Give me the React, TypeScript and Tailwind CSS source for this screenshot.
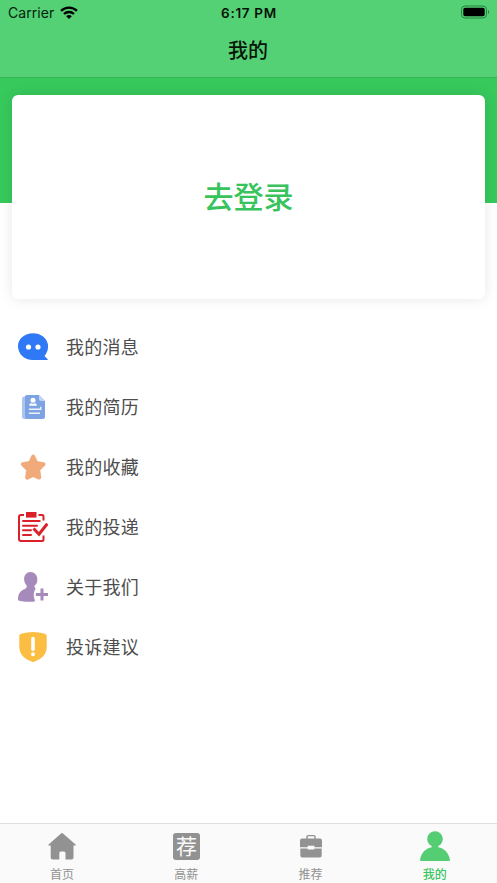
import type { ReactNode } from "react";

const MessageIcon = () => (
  <svg viewBox="0 0 30 30" className="size-[30px]">
    <path d="M15 1.300C6.600 1.300 0 6.800 0 14.300c0 7.600 6.400 13.800 15 13.800h14.200c.8 0 .7-.6.2-1l-2.900-3.200c2.200-2.400 3.600-5.600 3.600-9.600C30 6.800 23.400 1.300 15 1.300Z" fill="#2f78f6" />
    <circle cx="10.500" cy="15" r="2.600" fill="#fff" />
    <circle cx="20" cy="15" r="2.600" fill="#fff" />
  </svg>
);

const ResumeIcon = () => (
  <svg viewBox="0 0 30 30" className="size-[30px]">
    <path d="M6.500 4.500h16v22.500h-16a2.500 2.500 0 0 1-2.500-2.500V7a2.500 2.500 0 0 1 2.500-2.500Z" fill="#abc5ef" />
    <path d="M9 3H21l6 6v15.500a2.500 2.500 0 0 1-2.500 2.500h-15A2.500 2.500 0 0 1 7 24.500V5A2 2 0 0 1 9 3Z" fill="#7da3e2" />
    <path d="m21 3 6 6h-4a2 2 0 0 1-2-2Z" fill="#c3d5f4" />
    <circle cx="15" cy="8.300" r="2.500" fill="#fff" />
    <path d="M11.300 13.800c0-3.300 1.800-3 3.700-1.700 1.900-1.300 3.700-1.600 3.700 1.700Z" fill="#fff" />
    <path d="M10.800 17.300h11.900v-2.600M10.800 21.300h11.200" fill="none" stroke="#fff" strokeOpacity=".85" strokeWidth="1.400" />
  </svg>
);

const StarIcon = () => (
  <svg viewBox="0 0 30 30" className="size-[30px]">
    <path d="m15.200 4.600 3 6.500 7.400 1.100-5.400 5.400 1 8-6-2.600-6 2.600 1-8-5.400-5.400 7.400-1.100Z" fill="#f1aa7a" stroke="#f1aa7a" strokeWidth="4" strokeLinejoin="round" />
  </svg>
);

const DeliveryIcon = () => (
  <svg viewBox="0 0 30 30" className="size-[30px]" fill="none" stroke="#dc2029" strokeWidth="2">
    <path d="M6 3H3a2 2 0 0 0-2 2v22a2 2 0 0 0 2 2h21a1.500 1.500 0 0 0 1.500-1.500v-4M20.500 3H24a1.500 1.500 0 0 1 1.500 1.500v4" />
    <path d="M8 0h10.500v5.600H8z" fill="#dc2029" stroke="none" />
    <path d="M5 9h16.700M5 13.700h14M5 18.300h8M5 23h8" strokeWidth="2" strokeLinecap="round" />
    <path d="m15.500 16.500 5.500 5.800 8.300-10.500" strokeWidth="3" />
  </svg>
);

const AboutIcon = () => (
  <svg viewBox="0 0 30 30" className="size-[30px]" fill="#a58abb">
    <path d="M12.500 0C8.800 0 6.100 3 6.100 7c0 2.800 1.200 5 2.500 6.500.5 2-.5 3-3 4C1.300 19.600-.3 23.500 0 28c1.800 2 12.500 2.200 16.400 1.500.8-.4.6-.9.200-2-1.600-4.200-.8-8.100 1.100-11-1.200-.8-1.600-1.700-1-3C19 11.800 19.400 9.500 19.300 7c0-4-3-7-6.800-7Z" />
    <path d="M24 16.500v12M17.800 22.500h12.400" fill="none" stroke="#a58abb" strokeWidth="3" />
  </svg>
);

const ShieldIcon = () => (
  <svg viewBox="0 0 30 30" className="size-[30px]">
    <path d="M15.100 0c3.300 0 7.800.8 11.300 1.700 1.500.4 2.300 1.100 2.300 2.300v10.500c0 8.200-4.600 11.900-12.600 15.300-.7.300-1.300.3-2 0C6.100 26.400 1.300 22.700 1.300 14.500V4c0-1.200.8-1.900 2.300-2.300C7.100.8 11.800 0 15.100 0Z" fill="#fbbd42" />
    <path d="M15 6.500v10.800" stroke="#fff" strokeWidth="3.600" strokeLinecap="round" />
    <circle cx="15" cy="22.200" r="2" fill="#fff" />
  </svg>
);

const HomeIcon = () => (
  <svg viewBox="0 0 30 30" className="size-[30px]">
    <path d="M14.300 2.300q.7-.6 1.400 0L28.600 13.600c.5.500.3 1-.4 1h-1.700v12a2 2 0 0 1-2 2h-6V22a1.500 1.500 0 0 0-1.500-1.500h-3.200a1.500 1.500 0 0 0-1.500 1.500v6.600H5.700a2 2 0 0 1-2-2v-12H2c-.7 0-.9-.5-.4-1Z" fill="#929292" />
  </svg>
);

const SalaryIcon = () => (
  <div className="flex size-[30px] items-center justify-center">
    <div className="flex size-[27px] items-center justify-center rounded-[3px] bg-[#929292] text-[21px] leading-none text-[#fafafa]">
      <span className="-mt-[2px]">荐</span>
    </div>
  </div>
);

const BriefcaseIcon = () => (
  <svg viewBox="0 0 30 30" className="size-[30px]">
    <path d="M11 8V5.800c0-.7.500-1.200 1.200-1.200h5.600c.7 0 1.200.5 1.200 1.200V8" fill="none" stroke="#929292" strokeWidth="1.400" />
    <path d="M6 7.500h18a2 2 0 0 1 2 2v6.800H4V9.500a2 2 0 0 1 2-2ZM4.300 17.500h21.400v7a2 2 0 0 1-2 2H6.300a2 2 0 0 1-2-2Z" fill="#929292" />
    <path d="M11.700 14.700h6.600v3.800h-6.600z" fill="#fafafa" />
  </svg>
);

const ProfileIcon = () => (
  <svg viewBox="0 0 30 30" className="size-[30px]" fill="#55cd73">
    <circle cx="15" cy="8" r="7.800" />
    <path d="M11.800 14h6.400v2.200c5.700.7 10.400 5.500 11.700 12.300.2 1-.2 1.500-1 1.500H1.100c-.8 0-1.200-.5-1-1.500 1.300-6.800 6-11.600 11.700-12.300Z" />
  </svg>
);

const menu: { label: string; icon: ReactNode }[] = [
  { label: "我的消息", icon: <MessageIcon /> },
  { label: "我的简历", icon: <ResumeIcon /> },
  { label: "我的收藏", icon: <StarIcon /> },
  { label: "我的投递", icon: <DeliveryIcon /> },
  { label: "关于我们", icon: <AboutIcon /> },
  { label: "投诉建议", icon: <ShieldIcon /> },
];

const tabs: { label: string; icon: ReactNode; active?: boolean }[] = [
  { label: "首页", icon: <HomeIcon /> },
  { label: "高薪", icon: <SalaryIcon /> },
  { label: "推荐", icon: <BriefcaseIcon /> },
  { label: "我的", icon: <ProfileIcon />, active: true },
];

function StatusBar() {
  return (
    <div className="grid h-[26px] grid-cols-3 items-center pr-[7px] pl-[8px] font-[Inter,sans-serif] text-[13.5px] text-[#06220e]">
      <div className="flex items-center gap-[6px]">
        <span className="pb-[2px] text-[14px] tracking-[0.05px]">Carrier</span>
        <svg viewBox="0 0 18 13" className="mb-[2px] h-[13px] w-[18px]" fill="none" stroke="#000" strokeWidth="2.300">
          <path d="M1 4.800c4.500-4.300 11.500-4.300 16 0M4 8c2.800-2.700 7.200-2.700 10 0" />
          <path d="M6.200 10.200c1.600-1.500 4-1.500 5.600 0L9 13Z" fill="#000" stroke="none" />
        </svg>
      </div>
      <span className="text-center font-semibold tracking-[0.7px] text-[#041207]">6:17 PM</span>
      <svg viewBox="0 0 30 14" className="mb-[2px] h-[14px] w-[30px] justify-self-end">
        <rect x="1.500" y="1" width="25" height="12" rx="3.500" fill="none" stroke="#28823f" />
        <rect x="3.300" y="2.800" width="21.400" height="8.400" rx="1.800" />
        <path d="M28 5c1.500.5 1.500 3.500 0 4Z" fill="#28823f" />
      </svg>
    </div>
  );
}

export default function App() {
  return (
    <div className="flex h-[883px] w-[497px] flex-col overflow-hidden bg-white font-['Noto_Sans_CJK_SC',sans-serif]">
      <header className="h-[78px] shrink-0 border-b border-[#38b45a] bg-[#54d075]">
        <StatusBar />
        <h1 className="pr-[1px] text-center text-[20px] leading-[48px] font-medium text-[#07150a]">我的</h1>
      </header>
      <main className="flex flex-1 flex-col">
        <section className="h-[221px] bg-[linear-gradient(#37c95c_125px,#fff_125px)] px-[12px] pt-[17px]">
          <button className="flex h-[204px] w-full items-center justify-center rounded-[6px] bg-white pb-[4px] text-[30px] leading-none font-medium text-[#38c35d] shadow-[0_0_14px_rgba(0,0,0,0.1)]">
            去登录
          </button>
        </section>
        <nav className="mt-[18px]">
          {menu.map(({ label, icon }) => (
            <button key={label} className="flex h-[60px] w-full items-center gap-[18px] pl-[18px] text-[18px] leading-none tracking-[0.25px] text-[#4d4d4d]">
              {icon}
              <span className="pb-[2px]">{label}</span>
            </button>
          ))}
        </nav>
      </main>
      <footer className="grid h-[60px] shrink-0 grid-cols-4 border-t border-[#dedede] bg-[#fafafa]">
        {tabs.map(({ label, icon, active }) => (
          <button key={label} className={`flex flex-col items-center gap-[6px] pt-[7px] text-[12px] leading-[14px] ${active ? "font-medium text-[#3cc661]" : "text-[#929292]"}`}>
            {icon}
            <span>{label}</span>
          </button>
        ))}
      </footer>
    </div>
  );
}
